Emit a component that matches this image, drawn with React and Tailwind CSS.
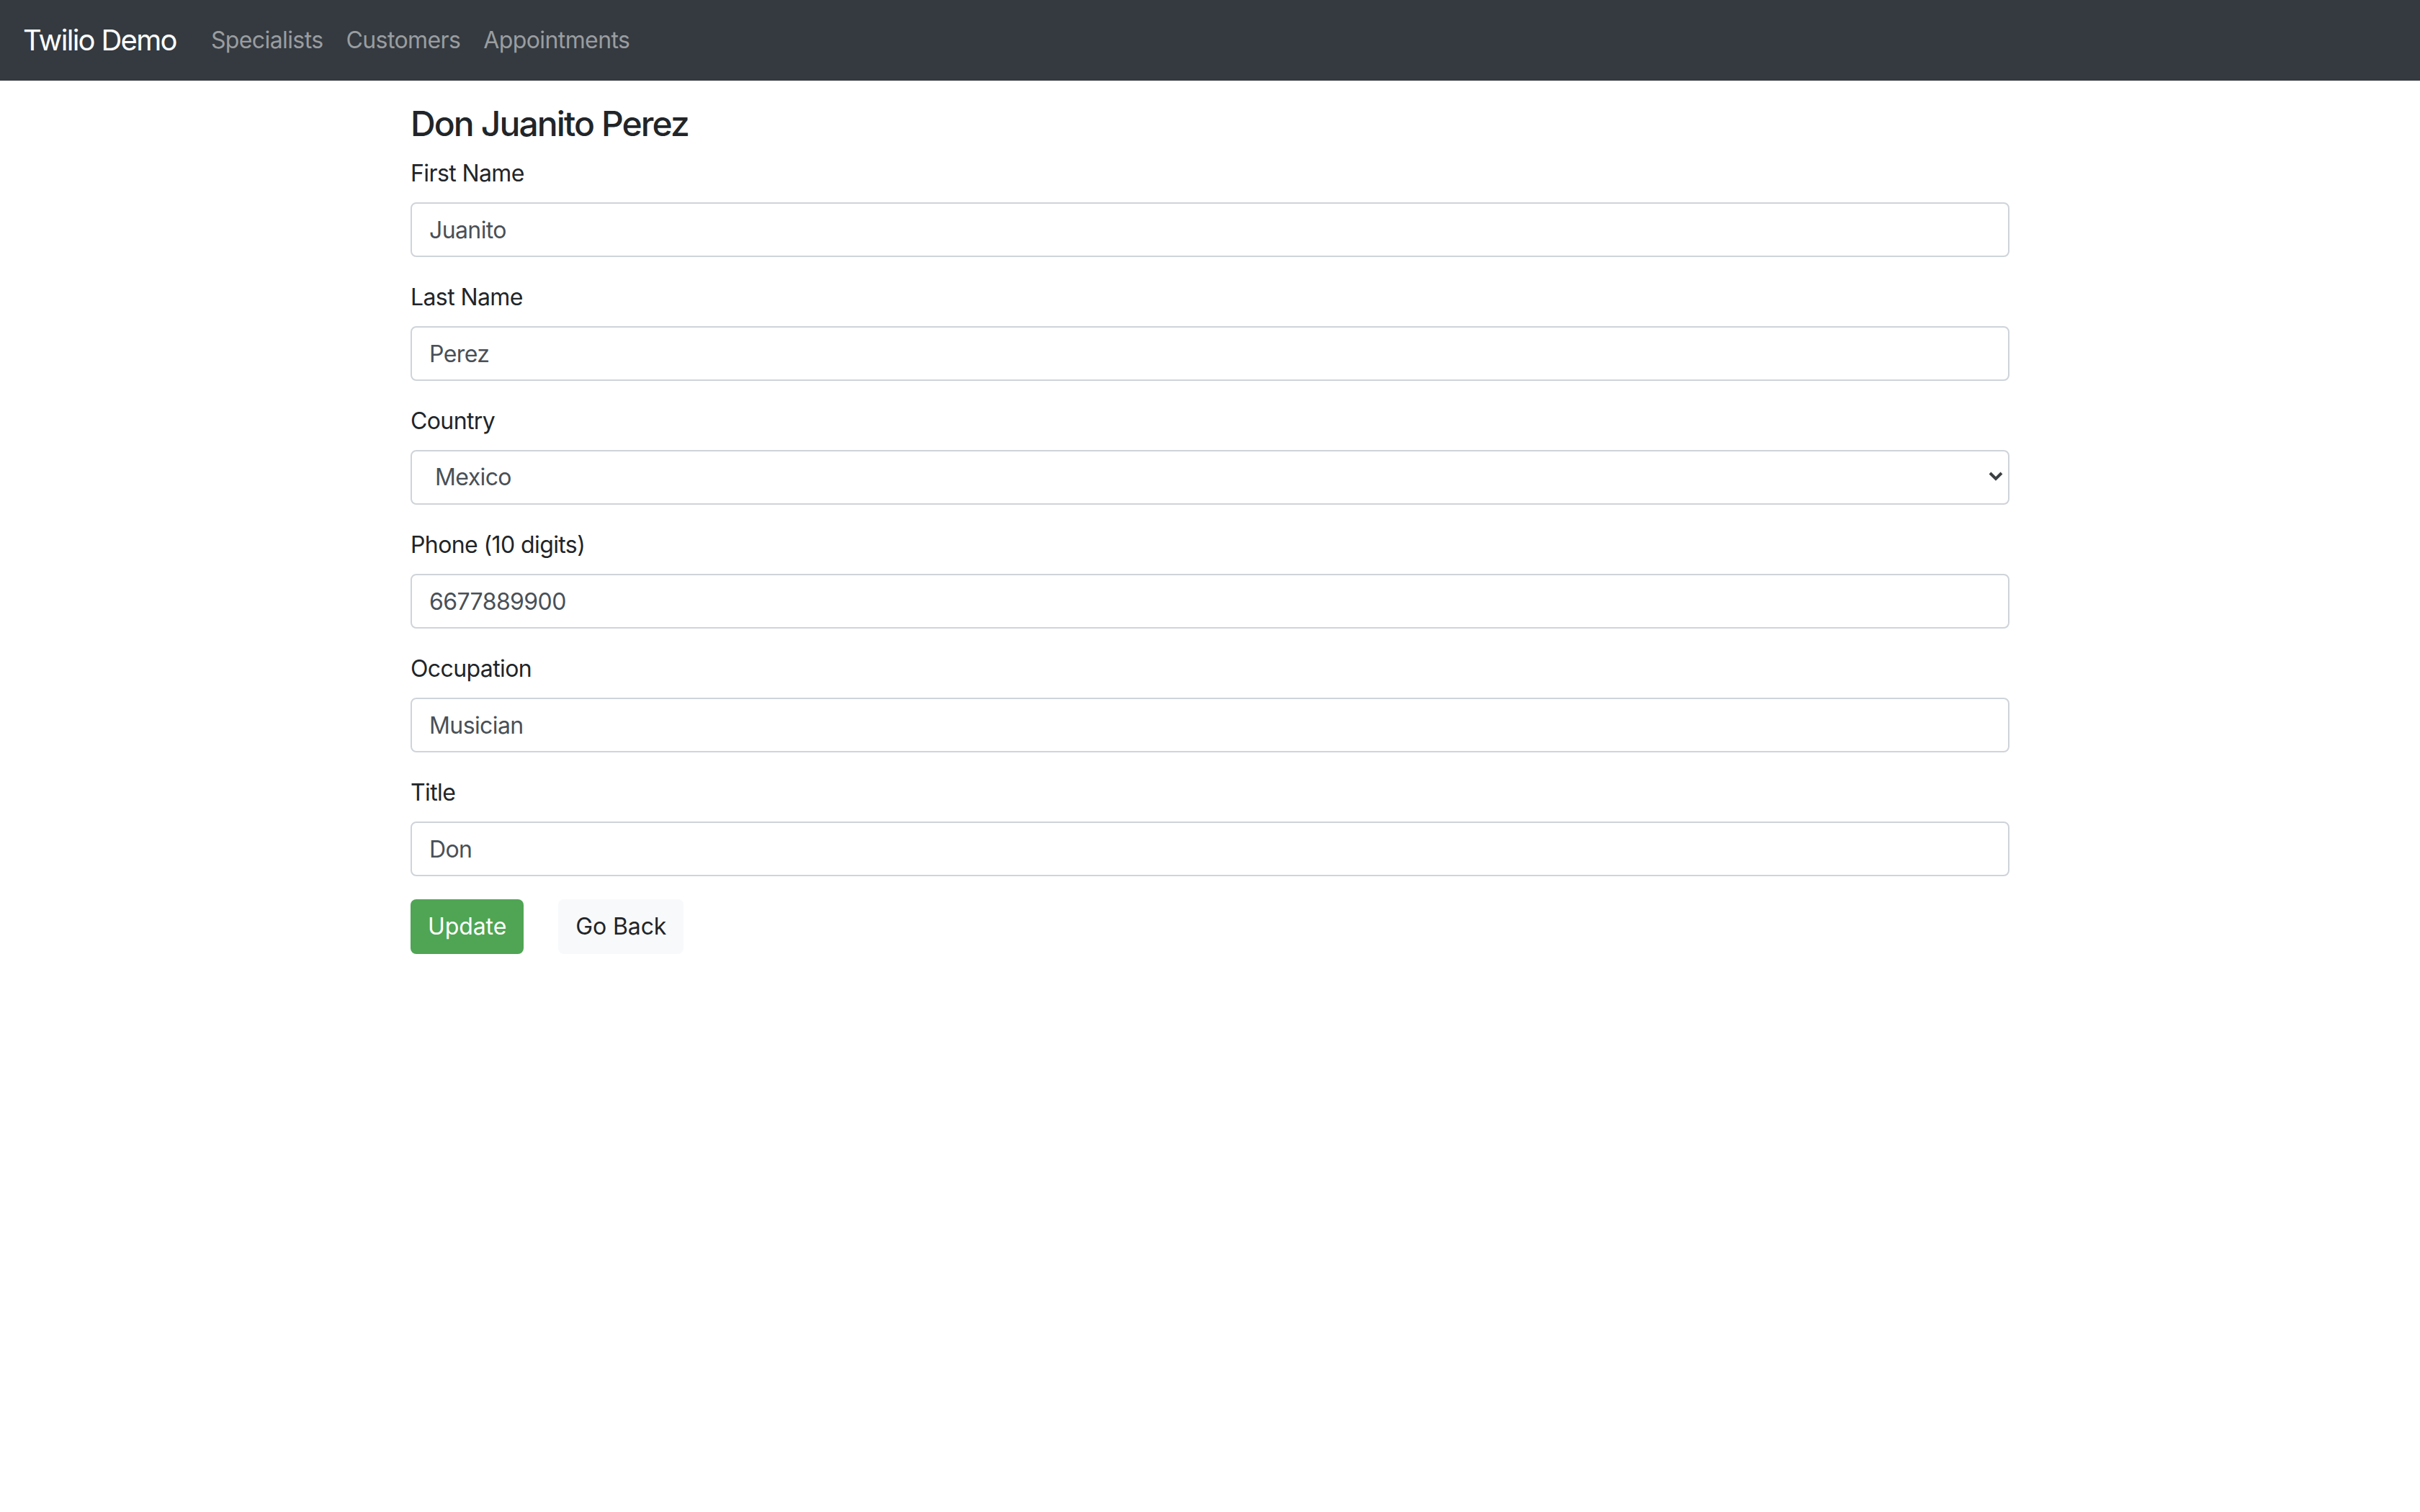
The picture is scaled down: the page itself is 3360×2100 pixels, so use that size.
import { useState } from 'react';

const font = { fontFamily: 'Inter, "Noto Sans", sans-serif' };

function Field({ label, children }) {
  return (
    <div className="mb-[32px]">
      <label className="block text-[32px] leading-[48px] mb-[16px] text-[#212529]">{label}</label>
      {children}
    </div>
  );
}

function TextInput({ value, onChange }) {
  return (
    <input
      value={value}
      onChange={(e) => onChange(e.target.value)}
      className="block w-full h-[76px] px-[24px] text-[32px] tracking-[-0.6px] text-[#495057] bg-white border-2 border-[#ced4da] rounded-[8px] outline-none"
    />
  );
}

export default function App() {
  const [form, setForm] = useState({
    first: 'Juanito',
    last: 'Perez',
    country: 'Mexico',
    phone: '6677889900',
    occupation: 'Musician',
    title: 'Don',
  });
  const set = (k) => (v) => setForm({ ...form, [k]: v });

  return (
    <div className="min-h-screen bg-white tracking-[-0.6px]" style={font}>
      {/* Navbar */}
      <nav className="h-[112px] bg-[#343a40] flex items-center px-[32px]">
        <span className="text-[40px] text-white mr-[32px] tracking-[-1.7px]">Twilio Demo</span>
        <a className="px-[16px] text-[32px] text-[#9a9da0]">Specialists</a>
        <a className="px-[16px] text-[32px] text-[#9a9da0]">Customers</a>
        <a className="px-[16px] text-[32px] text-[#9a9da0]">Appointments</a>
      </nav>

      <div className="w-[2220px] mx-auto pt-[31px]">
        <h4 className="text-[48px] leading-[58px] font-medium tracking-[-1.9px] text-[#212529] mb-[16px]">
          {form.title} {form.first} {form.last}
        </h4>

        <Field label="First Name">
          <TextInput value={form.first} onChange={set('first')} />
        </Field>
        <Field label="Last Name">
          <TextInput value={form.last} onChange={set('last')} />
        </Field>
        <Field label="Country">
          <div className="relative">
            <select
              value={form.country}
              onChange={(e) => set('country')(e.target.value)}
              className="block w-full h-[76px] pl-[32px] pr-[60px] text-[32px] tracking-[-0.6px] text-[#495057] bg-white border-2 border-[#ced4da] rounded-[8px] outline-none appearance-none"
            >
              <option>Mexico</option>
              <option>United States</option>
              <option>Canada</option>
            </select>
            <svg
              className="absolute right-[8px] top-[28px] pointer-events-none"
              width="22"
              height="16"
              viewBox="0 0 22 16"
            >
              <path d="M3 4 L11 12 L19 4" fill="none" stroke="#3c4043" strokeWidth="4" />
            </svg>
          </div>
        </Field>
        <Field label="Phone (10 digits)">
          <TextInput value={form.phone} onChange={set('phone')} />
        </Field>
        <Field label="Occupation">
          <TextInput value={form.occupation} onChange={set('occupation')} />
        </Field>
        <Field label="Title">
          <TextInput value={form.title} onChange={set('title')} />
        </Field>

        <div className="flex gap-[48px]">
          <button className="h-[76px] px-[24px] text-[32px] tracking-[-0.1px] text-white bg-[#4fa553] rounded-[8px]">
            Update
          </button>
          <button className="h-[76px] px-[24px] text-[32px] tracking-[-0.1px] text-[#212529] bg-[#f8f9fa] rounded-[8px]">
            Go Back
          </button>
        </div>
      </div>
    </div>
  );
}
